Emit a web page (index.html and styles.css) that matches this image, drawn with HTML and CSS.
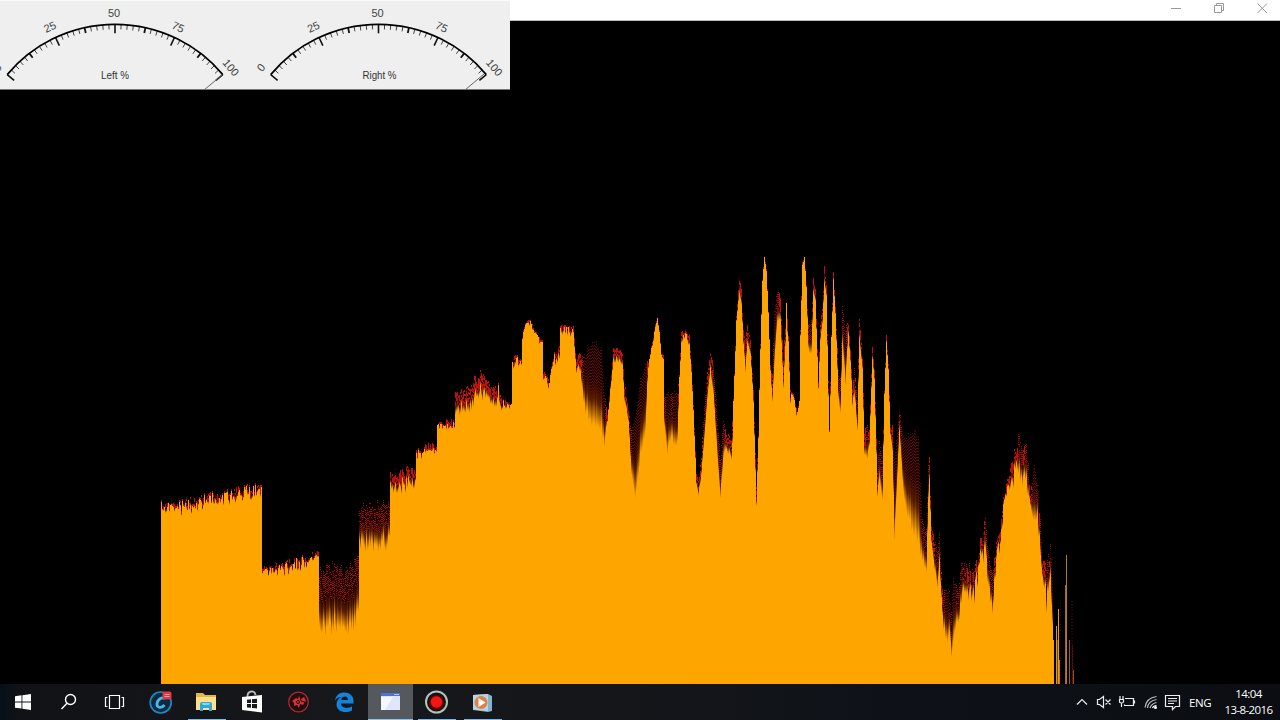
FILE: index.html
```
<!DOCTYPE html>
<html lang="en">
<head>
	<meta charset="UTF-8">
	<title>Spectrum</title>
	<link rel="stylesheet" href="styles.css">
</head>
<body>
<div class="desktop">

	<div class="titlebar">
		<svg class="winbtn" width="12" height="12" viewBox="0 0 12 12"><path d="M1 6.5h10"/></svg>
		<svg class="winbtn" width="12" height="12" viewBox="0 0 12 12"><path d="M1.5 3.5h7v7h-7zM3.5 3.5v-2h7v7h-2"/></svg>
		<svg class="winbtn" width="12" height="12" viewBox="0 0 12 12"><path d="M1.5 1.5l9.5 9.5M11 1.5L1.5 11"/></svg>
	</div>

	<canvas id="spectrum" class="spectrum" width="1280" height="663"></canvas>

	<div class="meters">
		<svg width="510" height="89" viewBox="0 0 510 89">
			<g transform="translate(115 165)">
				<g class="scale"></g>
				<path class="arc" d="M-107.8 -90.4A140.7 140.7 0 0 1 107.8 -90.4"/>
				<path class="needle" d="M107 -90L89 -75"/>
				<text x="-1" y="-148">50</text>
				<text transform="translate(-63.500 -134.500) rotate(-25)">25</text>
				<text transform="translate(61.500 -134.500) rotate(25)">75</text>
				<text transform="translate(-114.500 -95) rotate(-50)">0</text>
				<text transform="translate(113 -95) rotate(50)">100</text>
				<text class="label" x="0" y="-86" textLength="28" lengthAdjust="spacingAndGlyphs">Left %</text>
			</g>
			<g transform="translate(378.500 165)">
				<g class="scale"></g>
				<path class="arc" d="M-107.8 -90.4A140.7 140.7 0 0 1 107.8 -90.4"/>
				<path class="needle" d="M105.500 -91L86.500 -75"/>
				<text x="-1" y="-148">50</text>
				<text transform="translate(-63.500 -134.500) rotate(-25)">25</text>
				<text transform="translate(61.500 -134.500) rotate(25)">75</text>
				<text transform="translate(-114.500 -95) rotate(-50)">0</text>
				<text transform="translate(113 -95) rotate(50)">100</text>
				<text class="label" x="1" y="-86" textLength="34" lengthAdjust="spacingAndGlyphs">Right %</text>
			</g>
		</svg>
	</div>

	<div class="taskbar">
		<div class="tasks">
			<div class="task">
				<svg width="24" height="24" viewBox="0 0 24 24"><path fill="#fff" d="M4 6.200l6.500-.9v6.200H4zM11.400 5.200L20 4v7.500h-8.600zM4 12.400h6.500v6.200L4 17.700zM11.400 12.400H20V20l-8.600-1.200z"/></svg>
			</div>
			<div class="task">
				<svg width="24" height="24" viewBox="0 0 24 24" fill="none" stroke="#fff" stroke-width="1.400"><circle cx="13.500" cy="9.500" r="5"/><path d="M10 13.300L4.500 19"/></svg>
			</div>
			<div class="task">
				<svg width="24" height="24" viewBox="0 0 24 24" fill="none" stroke="#fff" stroke-width="1.200"><path d="M6.500 5.500h10v13h-10zM4.500 7.500h-2v9h2M18.500 7.500h2v9h-2"/></svg>
			</div>
			<div class="task">
				<svg width="26" height="26" viewBox="0 0 26 26"><circle cx="12.700" cy="13.500" r="10.500" fill="#0b2b42" stroke="#2387bd" stroke-width="1.700"/><path d="M17 9.500c-3-2-7.500 1-8 5s4 5.500 7.500 1.500" fill="none" stroke="#49b9e4" stroke-width="2.800"/><rect x="14.500" y="2.500" width="9" height="8" rx="2" fill="#e23543"/><path d="M16.500 5.500h5M16.500 7.500h5" stroke="#f29aa0"/></svg>
			</div>
			<div class="task open">
				<svg width="24" height="24" viewBox="0 0 24 24"><path fill="#e5b54c" d="M1 3h7l2 2h11v15H1z"/><path fill="#ffe08a" d="M1 7h20v13H1z"/><path fill="#30a7dc" d="M5 21v-7q0-2 2-2h8q2 0 2 2v7h-3v-3H8v3z"/><path fill="#8bd8f2" d="M7 13h8l-1 2H8z"/></svg>
			</div>
			<div class="task">
				<svg width="24" height="24" viewBox="0 0 24 24"><path d="M6.500 7C6 .5 14-.5 14.500 5" fill="none" stroke="#bbb" stroke-width="1.800"/><path fill="#fff" d="M1 7l20-2v17.500L1 20z"/><path fill="#16181c" d="M6 9.700l4-.4v3.700H6zM11 9.200l5-.5V13h-5zM6 14h4v3.800l-4-.4zM11 14h5v4.400l-5-.5z"/></svg>
			</div>
			<div class="task">
				<svg width="24" height="24" viewBox="0 0 24 24"><circle cx="11.500" cy="12" r="9.800" fill="#1b1012" stroke="#b6252f" stroke-width="1.300"/><path fill="#dc2c35" d="M5 11l4-3 2 1 1-3 2 3 3-2 2 4-2 2-1 2-3-1-1 4-2-3-3 1v-3z"/><circle cx="11" cy="12" r="1.500" fill="none" stroke="#1b1012"/><path d="M13 7l1 4 4 1" fill="none" stroke="#1b1012"/></svg>
			</div>
			<div class="task">
				<svg width="24" height="24" viewBox="0 0 24 24"><path fill="#1483dc" d="M2 10.500C3 5 6.500 2.500 11.500 2.500c6 0 9 4.200 9 8.500v2.500H8c.2 5 7 5.400 11 2.800V20.500c-7 3.500-15.500.8-15.500-6 0-4 2-6 5-7.400-3 .2-5 1.500-6.500 3.400zM8.200 10H15c0-4.700-6.200-4.500-6.800 0z"/></svg>
			</div>
			<div class="task open active">
				<svg width="24" height="24" viewBox="0 0 24 24"><path fill="#dfe5fb" d="M2 3h19v17H2z"/><path fill="#f6f7ff" d="M2 7h12L6 20H2z"/><path fill="#4d73d5" d="M2 3h19v3H2z"/><path stroke="#b9c8f4" d="M15 4.500h5"/></svg>
			</div>
			<div class="task open">
				<svg width="26" height="26" viewBox="0 0 26 26"><circle cx="12.500" cy="13" r="10.500" fill="#141414" stroke="#b5c1bd" stroke-width="2"/><circle cx="12.500" cy="13.500" r="7.500" fill="#5c0808"/><circle cx="12.500" cy="13" r="5.800" fill="#f51414"/></svg>
			</div>
			<div class="task open">
				<svg width="24" height="24" viewBox="0 0 24 24"><path fill="#82b3cf" d="M2 5l15-1 4 2v15l-4 1-15-2z"/><path fill="#b8d5e3" d="M2 5l15-1v17L2 19.500z"/><circle cx="10" cy="12.500" r="6.500" fill="#e08045"/><path fill="#fff" d="M7.500 8l7 4.500-7 4.500z"/></svg>
			</div>
		</div>

		<div class="tray">
			<svg class="w22" height="24" viewBox="0 0 22 24"><path d="M6 14.500l5-5 5 5"/></svg>
			<svg class="w22" height="24" viewBox="0 0 22 24"><path d="M4.500 9.500h2l4-3v11l-4-3h-2zM12.500 9.500l5 5M17.500 9.500l-5 5"/></svg>
			<svg class="w24" height="24" viewBox="0 0 24 24"><path d="M10 8.500h8.500v7h-9v-1M19.500 10.500v3M5 6v3M8 6v3M4.500 9.500h4v2q0 1.500-2 1.500t-2-1.500zM6.500 13v4"/></svg>
			<svg class="w23" height="24" viewBox="0 0 23 24"><path stroke="#bbb" d="M6 17.500Q7 8 17.500 6.500M8.500 18Q9 11 17.500 9.500M11 18Q12 14 17.500 12.500"/><path stroke="#fff" d="M13.500 18q1-2.500 4-2.500"/><circle cx="16.500" cy="17.500" r="1.500" fill="#fff" stroke="none"/></svg>
			<svg class="w21" height="24" viewBox="0 0 21 24"><path d="M3.500 5.500h14v11h-4l-3 3v-3h-7zM6 8.500h9M6 11h9M6 13.500h6"/></svg>
			<span class="lang">ENG</span>
			<div class="clock"><span>14:04</span><span>13-8-2016</span></div>
		</div>
	</div>

</div>
<script src="script.js"></script>
</body>
</html>
```
FILE: styles.css
```
* {
	margin: 0;
	padding: 0;
	box-sizing: border-box;
}

body {
	background: #000;
	overflow: hidden;
}

.desktop {
	position: relative;
	display: flex;
	flex-direction: column;
	width: 1280px;
	height: 720px;
}

.titlebar {
	display: flex;
	justify-content: flex-end;
	gap: 31px;
	height: 21px;
	padding: 2px 12px 0 0;
	background: #fff;
	border-bottom: 1px solid #bbb;
}

.winbtn {
	fill: none;
	stroke: #999;
	stroke-width: 1;
}

.spectrum {
	display: block;
	background: #000;
}

/* level meters float over the top left corner of the window */
.meters {
	position: absolute;
	top: 0;
	left: 0;
	width: 510px;
	height: 90px;
	background: #efefef;
	border-top: 1px solid #fafafa;
	border-bottom: 1px solid #777;
}

.meters svg {
	display: block;
	margin-top: -1px;
}

.meters text {
	font: 11px "Liberation Sans", Arial, sans-serif;
	fill: #444;
	text-anchor: middle;
}

.meters .label {
	fill: #333;
}

.arc {
	fill: none;
	stroke: #000;
	stroke-width: 1.7;
}

.needle {
	stroke: #666;
	stroke-width: 1;
}

.tick {
	stroke: #444;
	stroke-width: 1;
}

.tick.mid {
	stroke: #111;
	stroke-width: 1.8;
}

.tick.big {
	stroke: #111;
	stroke-width: 1.6;
}

.taskbar {
	display: flex;
	justify-content: space-between;
	height: 36px;
	background: linear-gradient(90deg, #061018 0, #111215 20px, #17181b 350px, #15161a 600px, #0e1218 900px, #0b0d12 1280px);
}

.tasks {
	display: flex;
}

.task {
	display: flex;
	align-items: center;
	justify-content: center;
	width: 46px;
	height: 36px;
	padding-right: 1px;
}

.open {
	background: linear-gradient(#76b9ed, #76b9ed) center bottom / 38px 1px no-repeat;
}

.active {
	width: 45px;
	margin-right: 1px;
	padding-right: 0;
	background: linear-gradient(#8dc3ed, #8dc3ed) center bottom / 100% 1px no-repeat, #55585c;
}

.tray {
	display: flex;
	align-items: center;
	color: #fff;
	font: 12px "Open Sans", sans-serif;
}

.tray svg {
	fill: none;
	stroke: #eee;
	stroke-width: 1.2;
}

.w21 { width: 21px; }
.w22 { width: 22px; }
.w23 { width: 23px; }
.w24 { width: 24px; }

.lang {
	width: 34px;
	text-align: center;
	font-size: 11.5px;
	letter-spacing: -0.4px;
}

.clock {
	display: flex;
	flex-direction: column;
	align-items: center;
	width: 63px;
	font-size: 11.5px;
	line-height: 16px;
	letter-spacing: -0.6px;
}
```
FILE: script.js
```
// tick marks, one every 2.5 degrees between -50 and 50
var R = 140.7;
document.querySelectorAll('.scale').forEach(function (g) {
	for (var i = -20; i <= 20; i++) {
		var a = i * 2.5 * Math.PI / 180;
		var len = i % 10 == 0 ? 9 : (i % 5 == 0 ? 5.5 : 5);
		var line = document.createElementNS('http://www.w3.org/2000/svg', 'line');
		line.setAttribute('class', 'tick' + (i % 10 == 0 ? ' big' : (i % 5 == 0 ? ' mid' : '')));
		line.setAttribute('x1', Math.sin(a) * R);
		line.setAttribute('y1', -Math.cos(a) * R);
		line.setAttribute('x2', Math.sin(a) * (R - len));
		line.setAttribute('y2', -Math.cos(a) * (R - len));
		g.appendChild(line);
	}
});

// x, peak (red), level (solid orange), jitter
var pts = [
	[161, 504, 509, 5], [180, 504, 509, 6], [200, 498, 503, 6], [240, 490, 496, 6], [261, 484, 491, 6],
	[262, 570, 574, 4], [275, 566, 571, 5], [300, 560, 566, 6], [315, 554, 558, 4], [318, 555, 560, 5],
	[319, 572, 629, 6], [335, 564, 625, 8], [345, 571, 630, 6], [358, 560, 620, 8],
	[359, 508, 545, 6], [375, 505, 547, 6], [389, 502, 542, 7],
	[390, 476, 490, 5], [405, 471, 486, 6], [415, 471, 486, 6],
	[416, 451, 455, 4], [425, 447, 452, 5], [436, 446, 450, 5],
	[437, 424, 427, 3], [450, 421, 428, 5], [454, 424, 428, 3],
	[455, 393, 412, 4], [465, 388, 408, 6], [475, 381, 400, 8], [482, 374, 394, 7], [490, 386, 402, 5], [498, 386, 403, 6],
	[501, 398, 407, 5], [511, 404, 408, 3], [512, 361, 371, 3], [516, 355, 361, 3], [521, 362, 366, 3],
	[522, 335, 337, 3], [525, 322, 324, 2], [530, 321, 324, 3], [534, 330, 333, 3], [537, 336, 340, 4], [542, 340, 344, 3],
	[543, 372, 377, 3], [549, 378, 385, 5], [552, 361, 365, 4], [555, 352, 362, 4], [559, 346, 358, 3],
	[560, 326, 334, 2], [573, 326, 335, 3], [575, 350, 358, 2], [576, 360, 370, 3], [580, 352, 368, 4],
	[583, 358, 405, 3], [588, 348, 420, 5], [595, 342, 423, 5], [601, 350, 430, 5], [604, 395, 445, 3], [607, 415, 422, 3],
	[610, 385, 390, 2], [613, 348, 361, 2], [617, 348, 360, 3], [622, 355, 368, 3], [624, 380, 400, 2], [628, 405, 420, 3],
	[631, 430, 476, 3], [635, 416, 498, 2], [640, 380, 458, 4], [645, 365, 430, 4], [648, 362, 366, 2], [652, 342, 345, 2],
	[655, 325, 328, 2], [657, 317, 318, 1], [659, 330, 333, 2], [661, 353, 355, 1], [663, 355, 360, 1], [664, 395, 425, 2],
	[667, 390, 450, 4], [670, 392, 440, 5], [677, 395, 445, 4], [679, 375, 385, 2], [681, 333, 342, 2], [685, 330, 336, 2],
	[689, 336, 345, 2], [691, 365, 372, 2], [693, 405, 410, 1], [696, 475, 488, 3], [698, 480, 493, 2], [701, 455, 475, 2],
	[704, 405, 440, 2], [707, 373, 400, 2], [710, 352, 370, 3], [713, 365, 395, 2], [716, 400, 445, 3], [720, 460, 500, 2],
	[723, 418, 455, 4], [726, 432, 445, 4], [731, 440, 461, 3], [733, 400, 430, 2], [734, 375, 383, 1], [736, 316, 322, 1],
	[738, 290, 302, 1], [739, 275, 295, 0], [741, 288, 305, 1], [743, 330, 345, 1], [745, 340, 375, 2], [747, 326, 345, 1],
	[750, 340, 354, 1], [753, 390, 402, 1], [756, 485, 506, 0], [758, 430, 440, 1], [760, 345, 350, 1], [762, 279, 281, 1],
	[764, 255, 258, 1], [766, 268, 270, 1], [768, 310, 312, 1], [770, 365, 370, 1], [772, 375, 404, 2], [774, 310, 365, 2],
	[777, 290, 318, 4], [780, 295, 322, 4], [783, 360, 390, 2], [786, 303, 325, 1], [788, 336, 342, 1], [790, 390, 404, 2],
	[793, 392, 395, 3], [797, 412, 420, 2], [799, 400, 403, 1], [800, 330, 336, 0], [802, 262, 265, 1], [804, 256, 258, 1],
	[806, 282, 286, 1], [808, 325, 350, 1], [811, 320, 355, 2], [813, 278, 292, 1], [815, 290, 302, 1], [818, 380, 388, 1],
	[820, 325, 340, 1], [822, 305, 325, 1], [824, 267, 284, 1], [826, 285, 296, 1], [829, 430, 448, 0], [831, 335, 345, 1],
	[833, 272, 280, 0], [835, 307, 315, 1], [838, 370, 400, 2], [840, 375, 412, 2], [842, 305, 345, 1], [845, 330, 385, 2],
	[848, 320, 335, 1], [850, 350, 362, 1], [852, 390, 405, 2], [854, 368, 395, 3], [857, 400, 430, 2], [859, 318, 340, 1],
	[862, 355, 370, 1], [864, 430, 455, 1], [867, 425, 460, 3], [869, 430, 445, 2], [872, 345, 360, 0], [874, 370, 380, 1],
	[877, 470, 495, 2], [879, 440, 480, 2], [882, 460, 500, 2], [884, 390, 395, 1], [886, 335, 342, 0], [888, 365, 370, 1],
	[890, 425, 435, 2], [892, 425, 450, 2], [894, 460, 540, 1], [896, 440, 500, 2], [899, 405, 432, 1], [902, 430, 480, 2],
	[905, 440, 508, 4], [909, 435, 518, 5], [913, 430, 535, 6], [918, 440, 540, 6], [922, 520, 560, 4], [926, 530, 570, 3],
	[928, 465, 500, 0], [929, 457, 480, 0], [931, 528, 545, 1], [934, 540, 570, 4], [937, 550, 590, 3], [939, 533, 565, 3],
	[942, 590, 620, 4], [946, 590, 642, 4], [949, 595, 640, 8], [951, 610, 655, 3], [953, 580, 640, 5], [958, 590, 620, 5],
	[961, 562, 600, 8], [966, 565, 585, 12], [971, 570, 602, 11], [976, 565, 586, 12], [980, 542, 562, 9], [985, 520, 550, 6],
	[988, 553, 585, 8], [992, 575, 610, 6], [996, 548, 560, 8], [999, 535, 548, 8], [1003, 500, 512, 6], [1007, 478, 487, 5],
	[1012, 462, 480, 10], [1016, 453, 474, 11], [1019, 432, 470, 4], [1022, 457, 485, 12], [1026, 450, 485, 10], [1030, 487, 508, 9],
	[1034, 465, 520, 10], [1038, 490, 528, 10], [1042, 560, 578, 5], [1046, 560, 598, 13], [1050, 550, 588, 12], [1052, 575, 625, 4],
	[1053, 620, 650, 0]
];

var TOP = 21, BOTTOM = 684;
var ctx = document.getElementById('spectrum').getContext('2d');
ctx.translate(0, -TOP);

var seed = 7;
function rnd() {
	seed = (seed * 16807) % 2147483647;
	return seed / 2147483647;
}

function column(x, peak, level) {
	var h = level - peak;
	var fade = ctx.createLinearGradient(0, peak, 0, level);
	fade.addColorStop(0, h > 12 ? 'rgba(60,0,0,0.300)' : '#4c0802');
	fade.addColorStop(0.45, '#230200');
	fade.addColorStop(0.7, '#5c2000');
	fade.addColorStop(0.9, '#c87c00');
	fade.addColorStop(1, '#ffa500');
	ctx.fillStyle = fade;
	ctx.fillRect(x, peak, 1, h);
	ctx.fillStyle = '#ffa500';
	ctx.fillRect(x, level, 1, BOTTOM - level);
	// broken red pixels at the decaying peak, only faint dots where it has almost died out
	if (h > 45 && x > 560) {
		ctx.fillStyle = '#54100b';
		for (var y = peak + (x % 2); y < peak + h * 0.6; y += 3) {
			ctx.fillRect(x, y, 1, 1);
		}
		return;
	}
	var dots = Math.min(h * 0.6, 30);
	ctx.fillStyle = h > 28 ? '#921212' : '#bd1010';
	for (var y = 0; y < dots; y += 2) {
		if (rnd() < 0.65) ctx.fillRect(x, Math.round(peak + y), 1, h > 28 ? 1 : 2);
	}
}

for (var i = 0; i < pts.length - 1; i++) {
	var a = pts[i], b = pts[i + 1];
	for (var x = a[0]; x < b[0]; x++) {
		var t = (x - a[0]) / (b[0] - a[0]);
		var j = a[3] + (b[3] - a[3]) * t;
		var n = (rnd() - 0.5) * 2 * j;
		var peak = a[1] + (b[1] - a[1]) * t + n * 0.8;
		var level = a[2] + (b[2] - a[2]) * t + n * 0.5 + (rnd() - 0.5) * 2 * j;
		// some bars have no decay left and stand at full height
		if (b[2] - b[1] < 12 && rnd() < 0.3) level = peak + 1;
		column(x, Math.round(peak), Math.max(Math.round(level), Math.round(peak) + 1));
	}
}

// thin lines on the right edge
[[1053, 640, '#ffa500'], [1056, 626, '#dc9425'], [1057, 640, '#7a4a08'], [1058, 609, '#e69a20'], [1059, 660, '#c77a10'],
 [1065, 585, '#a66d1b'], [1066, 555, '#aa7a32'], [1069, 640, '#9a6112'], [1072, 645, '#5b1606'], [1073, 670, '#9a5010']].forEach(function (l) {
	ctx.fillStyle = l[2];
	ctx.fillRect(l[0], l[1], 1, BOTTOM - l[1]);
});
ctx.fillStyle = '#3a0505';
for (var y = 600; y < BOTTOM; y += 3) {
	ctx.fillRect(1060, y, 1, 1);
	ctx.fillRect(1071, y + 1, 2, 1);
}
```
